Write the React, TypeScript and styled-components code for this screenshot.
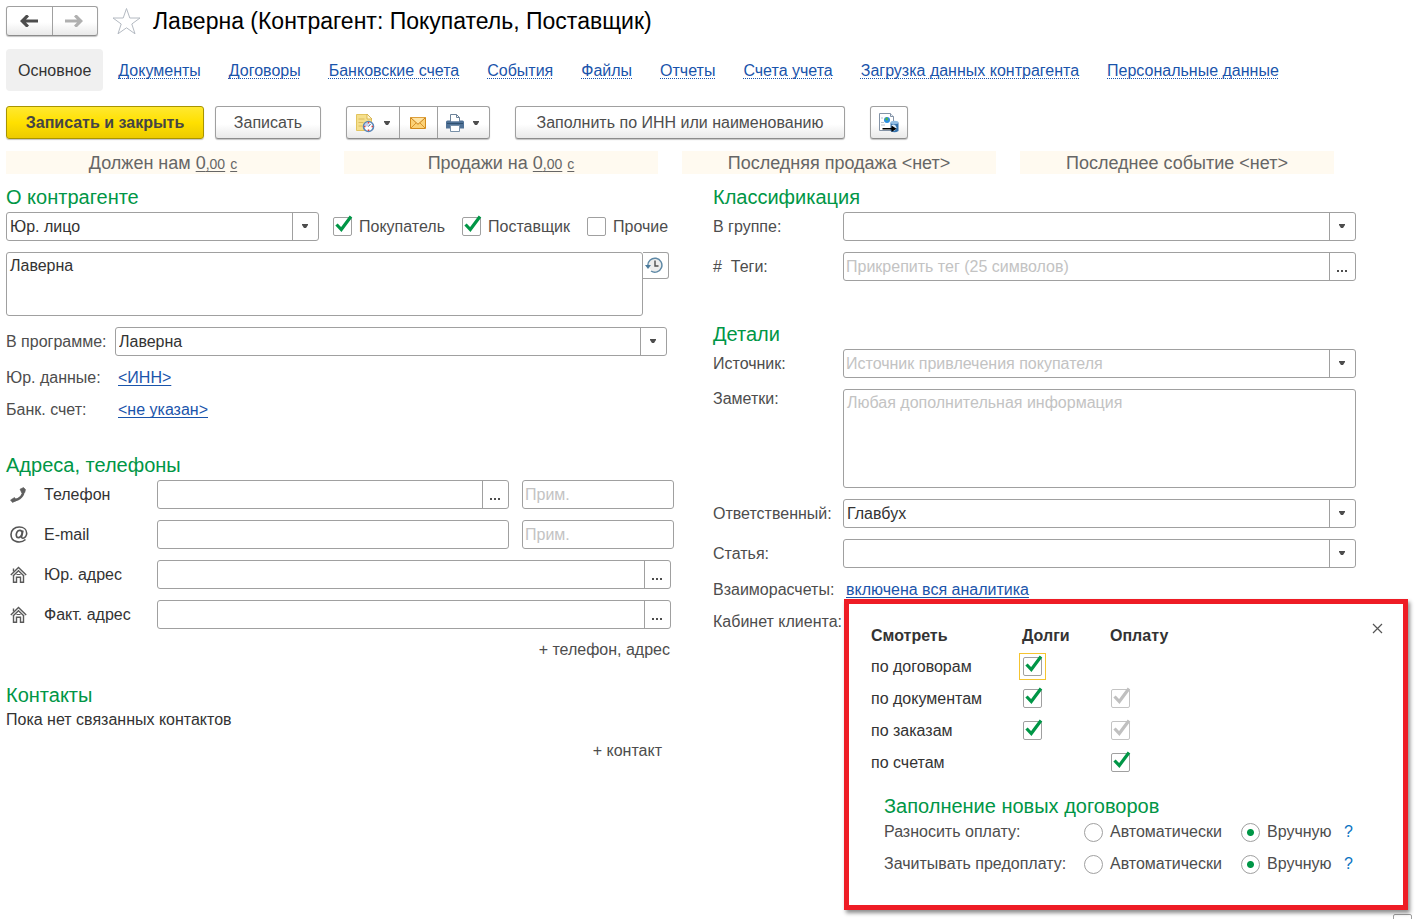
import React from "react";
import styled, { createGlobalStyle, css } from "styled-components";

const GlobalStyle = createGlobalStyle`
  * { box-sizing: border-box; }
  body {
    margin: 0;
    background: #fff;
    color: #4d4d4d;
    font: 16px/20px "Liberation Sans", Arial, sans-serif;
  }
  button, input, select, textarea { font: inherit; color: inherit; margin: 0; }
`;

const BORDER = "#a0a0a0";
const GREEN = "#009646";
const BLUE = "#1a54ab";

const Page = styled.div`
  display: flex;
  flex-direction: column;
  min-height: 100vh;
  overflow: hidden;
  padding-left: 6px;
`;

const Header = styled.header`
  display: flex;
  align-items: center;
  height: 42px;
`;

const raised = css`
  background: linear-gradient(#fff 55%, #e9e9e9);
  border: 1px solid ${BORDER};
  border-bottom-color: #8c8c8c;
  border-radius: 3px;
  box-shadow: 0 1px 1px #c4c4c4;
`;

const History = styled.div`
  ${raised}
  display: flex;
  width: 92px;
  height: 30px;
`;

const SegmentButton = styled.button<{ $width: number }>`
  display: flex;
  flex: 0 0 ${(p) => p.$width}px;
  align-items: center;
  justify-content: center;
  gap: 9px;
  padding: 0 2px 0 0;
  border: 0;
  background: none;
  & + & { border-left: 1px solid ${BORDER}; }
`;

const StarButton = styled.button`
  display: flex;
  margin: 0 12px 0 14px;
  padding: 0;
  border: 0;
  background: none;
`;

const Title = styled.h1`
  margin: 0;
  color: #000;
  font-size: 23px;
  line-height: 28px;
  font-weight: 400;
  white-space: nowrap;
`;

const Tabs = styled.nav`
  display: flex;
  align-items: center;
  gap: 28px;
  height: 42px;
  margin-top: 7px;
  white-space: nowrap;
`;

const ActiveTab = styled.a`
  padding: 12px 12px 10px;
  margin-right: -13px;
  border-radius: 4px;
  background: #f0f0f0;
  color: #333;
  text-decoration: none;
`;

const TabLink = styled.a`
  padding-top: 2px;
  color: ${BLUE};
  text-decoration: underline dotted 1px;
  text-decoration-skip-ink: none;
  text-underline-offset: 2px;
`;

const Toolbar = styled.div`
  display: flex;
  gap: 25px;
  margin: 15px 0 12px;
`;

const ButtonPair = styled.div`
  display: flex;
  gap: 11px;
`;

const ToolButton = styled.button<{ $width: number; $primary?: boolean }>`
  ${raised}
  display: flex;
  align-items: center;
  justify-content: center;
  width: ${(p) => p.$width}px;
  height: 33px;
  padding: 0;
  white-space: nowrap;
  ${(p) =>
    p.$primary &&
    css`
      background: linear-gradient(#ffe830, #ffe000 50%, #eccb00);
      border-color: #a89400;
      font-weight: 700;
      color: #454545;
    `}
`;

const ButtonGroup = styled.div`
  ${raised}
  display: flex;
  width: 144px;
  height: 33px;
`;

const Stats = styled.div`
  display: grid;
  grid-template-columns: repeat(4, minmax(0, 1fr));
  gap: 24px;
  margin-right: 83px;
`;

const Stat = styled.div`
  height: 23px;
  background: #fffaf0;
  color: #666;
  font-size: 18px;
  line-height: 24px;
  text-align: center;
  white-space: nowrap;
`;

const Amount = styled.span`
  text-decoration: underline 1px;
  text-underline-offset: 2px;
  small { font-size: 14px; }
`;

const Currency = styled(Amount)`
  font-size: 14px;
`;

const Columns = styled.main`
  display: grid;
  grid-template-columns: minmax(0, 668fr) minmax(0, 643fr);
  gap: 39px;
  margin: 11px 61px 0 0;
`;

const Column = styled.div`
  display: flex;
  flex-direction: column;
`;

const Section = styled.section<{ $before?: number }>`
  display: flex;
  flex-direction: column;
  gap: 11px;
  margin-top: ${(p) => p.$before ?? 0}px;
`;

const Heading = styled.h2`
  margin: 0 0 -8px;
  color: ${GREEN};
  font-size: 20px;
  line-height: 24px;
  font-weight: 400;
  white-space: nowrap;
`;

const Row = styled.div<{ $label: number; $end?: number; $top?: boolean }>`
  display: grid;
  grid-template-columns: ${(p) => p.$label}px minmax(0, 1fr);
  align-items: ${(p) => (p.$top ? "start" : "center")};
  margin-right: ${(p) => p.$end ?? 0}px;
`;

const TextRow = styled(Row)`
  line-height: 22px;
  height: 21px;
`;

const Label = styled.label`
  white-space: pre;
`;

const KindRow = styled.div`
  display: flex;
  align-items: center;
  gap: 17px;
`;

const KindField = styled.div`
  flex: 0 1 313px;
  margin-right: -3px;
`;

const Frame = styled.div`
  display: grid;
  grid-template-columns: minmax(0, 1fr) 26px;
  height: 29px;
  border: 1px solid ${BORDER};
  border-radius: 3px;
  background: #fff;
`;

const Select = styled.select<{ $hint?: boolean }>`
  grid-area: 1 / 1 / 2 / 3;
  appearance: none;
  width: 100%;
  padding: 0 28px 0 ${(p) => (p.$hint ? 2 : 3)}px;
  border: 0;
  background: none;
  color: ${(p) => (p.$hint ? "#c3c3c3" : "#333")};
`;

const ArrowCell = styled.span`
  grid-area: 1 / 2;
  display: flex;
  align-items: center;
  justify-content: center;
  padding: 0 2px 1px 0;
  border-left: 1px solid ${BORDER};
  pointer-events: none;
`;

const FrameInput = styled.input`
  width: 100%;
  padding: 0 2px;
  border: 0;
  background: none;
  &::placeholder { color: #c3c3c3; opacity: 1; }
`;

const DotsButton = styled.button`
  display: flex;
  align-items: center;
  justify-content: center;
  padding: 8px 1px 0 0;
  border: 0;
  border-left: 1px solid ${BORDER};
  background: none;
`;

const PlainInput = styled.input`
  width: 100%;
  height: 29px;
  padding: 0 2px;
  border: 1px solid ${BORDER};
  border-radius: 3px;
  &::placeholder { color: #c3c3c3; opacity: 1; }
`;

const TextArea = styled.textarea<{ $height: number }>`
  display: block;
  width: 100%;
  height: ${(p) => p.$height}px;
  padding: 3px;
  border: 1px solid ${BORDER};
  border-radius: 3px;
  color: #333;
  resize: none;
  &::placeholder { color: #c3c3c3; opacity: 1; }
`;

const NameRow = styled.div`
  display: flex;
  align-items: flex-start;
  margin-right: 5px;
`;

const HistoryButton = styled.button`
  display: flex;
  flex: 0 0 26px;
  align-items: center;
  justify-content: center;
  height: 27px;
  padding: 0 3px 2px 0;
  border: 1px solid ${BORDER};
  border-left: 0;
  border-radius: 0 3px 3px 0;
  background: #fff;
`;

const Link = styled.a`
  color: ${BLUE};
  text-decoration: underline 1px;
  text-underline-offset: 2px;
  text-decoration-skip-ink: none;
  white-space: nowrap;
`;

const LinkCell = styled.div`
  padding-left: 3px;
`;

const CheckLabel = styled.label`
  display: flex;
  align-items: center;
  gap: 7px;
  white-space: nowrap;
`;

const CheckBox = styled.span<{ $focus?: boolean }>`
  display: inline-grid;
  width: 19px;
  height: 19px;
  vertical-align: top;
  ${(p) => p.$focus && "outline: 1px solid #f5c430; outline-offset: 3px;"}
  & > * { grid-area: 1 / 1; }
  input {
    appearance: none;
    width: 19px;
    height: 19px;
    border: 1px solid ${BORDER};
    border-radius: 2px;
    background: #fff;
  }
  input:disabled { border-color: #c4c4c4; }
  svg { overflow: visible; visibility: hidden; pointer-events: none; }
  input:checked + svg { visibility: visible; }
`;

const ContactRow = styled.div<{ $end?: number; $note?: boolean }>`
  display: grid;
  grid-template-columns: 38px 113px minmax(0, 1fr) ${(p) => (p.$note ? "152px" : "")};
  align-items: center;
  margin-right: ${(p) => p.$end ?? 0}px;
  label { color: #333; }
  & > svg { margin-left: 4px; }
`;

const MainCell = styled.div`
  margin-right: 13px;
`;

const AddButton = styled.button<{ $end: number }>`
  align-self: flex-end;
  margin-right: ${(p) => p.$end}px;
  padding: 0;
  border: 0;
  background: none;
`;

const Note = styled.p`
  margin: 0;
  color: #333;
`;

const PopupAnchor = styled.div`
  position: relative;
  padding-left: 3px;
`;

const Popup = styled.div`
  position: absolute;
  top: calc(100% - 2px);
  left: 1px;
  right: -52px;
  height: 311px;
  padding: 17px 22px 0;
  border: 5px solid #ee1c25;
  background: #fff;
  box-shadow: 2px 3px 4px rgba(0, 0, 0, 0.45);
  line-height: 20px;
`;

const CloseButton = styled.button`
  position: absolute;
  top: 19px;
  right: 20px;
  display: flex;
  padding: 0;
  border: 0;
  background: none;
`;

const Matrix = styled.table`
  border-collapse: collapse;
  color: #333;
  th, td {
    height: 32px;
    padding: 0;
    text-align: left;
    vertical-align: middle;
    font-weight: 400;
    line-height: 20px;
  }
  thead th { height: 30px; font-weight: 700; }
  th:first-child { width: 151px; }
  th:nth-child(2) { width: 88px; }
  td { padding-left: 1px; }
`;

const Defaults = styled.div`
  margin: 15px 0 0 13px;
`;

const DefaultRow = styled.div`
  display: grid;
  grid-template-columns: 200px 157px 103px auto;
  align-items: center;
  height: 32px;
  white-space: nowrap;
`;

const DefaultsHeading = styled(Heading)`
  margin: 0 0 -2px;
`;

const Radio = styled.input`
  appearance: none;
  display: block;
  width: 19px;
  height: 19px;
  border: 1px solid ${BORDER};
  border-radius: 50%;
  background: #fff;
  &:checked { background: radial-gradient(circle, ${GREEN} 3px, #fff 4px); }
`;

const Help = styled.a`
  color: #0a73c2;
  text-decoration: none;
`;

const Footer = styled.footer`
  height: 5px;
  margin: auto 5px 0 0;
  overflow: hidden;
  text-align: right;
`;

function Caret() {
  return (
    <svg width="6" height="4" viewBox="0 0 6 4" aria-hidden="true">
      <path d="M0 0h6v1L4 4H2L0 1z" fill="#4d4d4d" />
    </svg>
  );
}

function Dots() {
  return (
    <svg width="10" height="2" viewBox="0 0 10 2" aria-hidden="true">
      <path d="M0 0h2v2H0zM4 0h2v2H4zM8 0h2v2H8z" fill="#4d4d4d" />
    </svg>
  );
}

function Arrow({ color, flip }: { color: string; flip?: boolean }) {
  return (
    <svg width="18" height="12" viewBox="0 0 18 12" aria-hidden="true">
      <path
        d={flip ? "M0 4.5h12l-3-3L10.5 0H12l6 6-6 6h-1.5L9 10.5l3-3H0z" : "M18 4.5H6l3-3L7.5 0H6L0 6l6 6h1.5L9 10.5l-3-3h12z"}
        fill={color}
      />
    </svg>
  );
}

function Star() {
  return (
    <svg width="29" height="28" viewBox="0 0 29 28" aria-hidden="true">
      <path
        d="M14.5 1.5 17.8 11H28l-8.200 6 3.200 9.800-8.500-6-8.500 6L9.200 17 1 11h10.200z"
        fill="#fff"
        stroke="#b4bac2"
      />
    </svg>
  );
}

function ReminderIcon() {
  return (
    <svg width="20" height="20" viewBox="0 0 20 20" aria-hidden="true">
      <path d="M1.5 1.5h11l4 4v12h-15z" fill="#f5df8c" stroke="#e2c45f" />
      <path d="M12 1v5h5z" fill="#fff6cf" stroke="#d3ad45" strokeWidth=".8" />
      <path d="M3.5 6h6M3.5 9.5h5M3.5 13h4" stroke="#dcbc5c" />
      <circle cx="13.5" cy="13.5" r="5" fill="#fff" stroke="#5a87b8" strokeWidth="1.6" />
      <path d="M13.5 13.5v-4a4 4 0 0 0-4 4z" fill="#c2d2f0" />
      <path d="M13.5 9v1.5M13.5 16.5V18M9 13.5h1.5M16.5 13.5H18" stroke="#e2403a" strokeWidth="1.5" />
      <path d="M13.5 13.5l2-2.500" stroke="#365f91" />
    </svg>
  );
}

function MailIcon() {
  return (
    <svg width="16" height="12" viewBox="0 0 16 12" aria-hidden="true">
      <path d="M.5.5h15v11H.5z" fill="#fbd176" stroke="#d28a1c" />
      <path d="M1 11l5.5-5.500M15 11L9.5 5.5" stroke="#d9942c" />
      <path d="M.8.8 8 7.3 15.2.8" fill="#ffe4a3" stroke="#c97f16" />
    </svg>
  );
}

function PrinterIcon() {
  return (
    <svg width="18" height="18" viewBox="0 0 18 18" aria-hidden="true">
      <path d="M4.5 8V.5h6l3 3V8z" fill="#fff" stroke="#6c8299" />
      <path d="M10.5.5v3h3" fill="none" stroke="#6c8299" />
      <path d="M0 8q0-1.500 1.500-1.500H4v1h10v-1h2.500Q18 6.500 18 8v6.500H0z" fill="#4f7196" />
      <path d="M1 9.5h16" stroke="#2f506f" />
      <path d="M4.5 11.5h9v6h-9z" fill="#fff" stroke="#7890a8" />
    </svg>
  );
}

function ExchangeIcon() {
  return (
    <svg width="20" height="20" viewBox="0 0 20 20" aria-hidden="true">
      <path d="M.5.5h11l3 3v14H.5z" fill="#fff" stroke="#8493a6" />
      <path d="M11.5.5v3h3" fill="#e6edf5" stroke="#8493a6" />
      <path d="M2 9.5h3M2 12h4M2 5h2" stroke="#b6c1ce" />
      <circle cx="8" cy="7" r="3" fill="#2c8ee0" />
      <path d="M6 6l2-2 1 2-1 2z" fill="#53b53d" />
      <path d="M11.5 9.5V18q4 2.500 8 0V9.500z" fill="#3572ad" />
      <ellipse cx="15.5" cy="9.5" rx="4" ry="1.7" fill="#91bce3" />
      <path d="M12.5 12q4-1.500 5 2.500-1 4-4 3.500z" fill="#dcebf8" />
      <path d="M3.5 15h9v-2.500l5 3.200-5 3.200V16.5h-9z" fill="#000" />
    </svg>
  );
}

function ClockBackIcon() {
  return (
    <svg width="18" height="16" viewBox="0 0 18 16" aria-hidden="true">
      <circle cx="10" cy="8" r="6.5" fill="#ececec" />
      <path d="M2.9 8.5A7 7 0 1 1 6 14" fill="none" stroke="#5e88a5" strokeWidth="1.5" />
      <path d="M0 8h6l-3 4z" fill="#4c7b9c" />
      <path d="M10 3.5V9h3.5" fill="none" stroke="#4d4d4d" strokeWidth="1.4" />
    </svg>
  );
}

function PhoneIcon() {
  return (
    <svg width="16" height="16" viewBox="0 0 16 16" aria-hidden="true">
      <path d="M13 2.5C14.5 7.5 10 13 3 13.5" fill="none" stroke="#5f5f5f" strokeWidth="2.4" />
      <path d="M10 2.200 13.5.5l2 2-.7 3-3 .5zM.5 13l4-2.500 2 3-4 2z" fill="#5f5f5f" stroke="#5f5f5f" strokeWidth=".6" strokeLinejoin="round" />
    </svg>
  );
}

function AtIcon() {
  return (
    <svg width="18" height="17" viewBox="0 0 18 17" aria-hidden="true" fill="none" stroke="#555">
      <path d="M15.5 13.5C11 17.5 1 16.8 1 8.5 1 4 4.5 1 9.200 1c4.500 0 7.500 2.600 7.500 6.200 0 3-2 5-3.700 5-1.400 0-1.600-1-1.200-2.600l1.200-5.100" strokeWidth="1.6" />
      <path d="M12.3 7C11.8 3.6 8.3 3.8 7 6.200c-1.300 2.400-.8 5.500 1.200 5.500 1.700 0 3.300-1.700 4.100-4.700z" strokeWidth="1.7" />
    </svg>
  );
}

function HouseIcon() {
  return (
    <svg width="17" height="17" viewBox="0 0 17 17" aria-hidden="true" fill="none" stroke="#5a5a5a">
      <path d="M.8 9 8.5 1.500 16.2 9M3 10l5.500-5.300L14 10" strokeWidth="1.4" />
      <path d="M3.500 2.500v3M3.500 9.500v6.800h3v-5h4v5h3V9.500" strokeWidth="1.4" />
      <path d="M6.500 8.500h4" />
    </svg>
  );
}

type CheckProps = { checked?: boolean; disabled?: boolean; focus?: boolean; label?: string };

function Check({ checked, disabled, focus, label }: CheckProps) {
  return (
    <CheckBox $focus={focus}>
      <input type="checkbox" defaultChecked={checked} disabled={disabled} aria-label={label} />
      <svg width="19" height="19" viewBox="0 0 19 19" aria-hidden="true">
        <path d="M3.5 7.5 8.3 12.5 18 -.5" fill="none" stroke={disabled ? "#c0c0c0" : GREEN} strokeWidth="3.2" />
      </svg>
    </CheckBox>
  );
}

function Dropdown({ id, value = "", hint, label }: { id: string; value?: string; hint?: boolean; label?: string }) {
  return (
    <Frame>
      <Select id={id} $hint={hint} aria-label={label}>
        <option>{value}</option>
      </Select>
      <ArrowCell>
        <Caret />
      </ArrowCell>
    </Frame>
  );
}

function Picker({ id, placeholder }: { id: string; placeholder?: string }) {
  return (
    <Frame>
      <FrameInput id={id} placeholder={placeholder} />
      <DotsButton aria-label="Выбрать">
        <Dots />
      </DotsButton>
    </Frame>
  );
}

const tabs = [
  "Документы",
  "Договоры",
  "Банковские счета",
  "События",
  "Файлы",
  "Отчеты",
  "Счета учета",
  "Загрузка данных контрагента",
  "Персональные данные",
];

type Mark = "on" | "locked" | "focused" | null;
const matrix: { name: string; debts: Mark; payment: Mark }[] = [
  { name: "по договорам", debts: "focused", payment: null },
  { name: "по документам", debts: "on", payment: "locked" },
  { name: "по заказам", debts: "on", payment: "locked" },
  { name: "по счетам", debts: null, payment: "on" },
];

function MarkCell({ mark, label }: { mark: Mark; label: string }) {
  return <td>{mark && <Check checked disabled={mark === "locked"} focus={mark === "focused"} label={label} />}</td>;
}

function Money() {
  return (
    <>
      <Amount>
        0<small>,00</small>
      </Amount>{" "}
      <Currency>с</Currency>
    </>
  );
}

function AnalyticsPopup() {
  return (
    <Popup role="dialog" aria-label="Аналитика взаиморасчетов">
      <CloseButton aria-label="Закрыть">
        <svg width="11" height="11" viewBox="0 0 11 11" aria-hidden="true">
          <path d="M1 1l9 9M10 1l-9 9" stroke="#555" strokeWidth="1.2" />
        </svg>
      </CloseButton>
      <Matrix>
        <thead>
          <tr>
            <th>Смотреть</th>
            <th>Долги</th>
            <th>Оплату</th>
          </tr>
        </thead>
        <tbody>
          {matrix.map((m) => (
            <tr key={m.name}>
              <th scope="row">{m.name}</th>
              <MarkCell mark={m.debts} label={`Долги ${m.name}`} />
              <MarkCell mark={m.payment} label={`Оплату ${m.name}`} />
            </tr>
          ))}
        </tbody>
      </Matrix>
      <Defaults>
        <DefaultsHeading>Заполнение новых договоров</DefaultsHeading>
        {["Разносить оплату:", "Зачитывать предоплату:"].map((name) => (
          <DefaultRow key={name} role="radiogroup" aria-label={name}>
            <span>{name}</span>
            <CheckLabel>
              <Radio type="radio" name={name} />
              Автоматически
            </CheckLabel>
            <CheckLabel>
              <Radio type="radio" name={name} defaultChecked />
              Вручную
            </CheckLabel>
            <Help href="#help">?</Help>
          </DefaultRow>
        ))}
      </Defaults>
    </Popup>
  );
}

export default function App() {
  return (
    <Page>
      <GlobalStyle />
      <Header>
        <History>
          <SegmentButton $width={45} aria-label="Назад">
            <Arrow color="#4d4d4d" />
          </SegmentButton>
          <SegmentButton $width={45} aria-label="Вперед">
            <Arrow color="#b0b0b0" flip />
          </SegmentButton>
        </History>
        <StarButton aria-label="В избранное">
          <Star />
        </StarButton>
        <Title>Лаверна (Контрагент: Покупатель, Поставщик)</Title>
      </Header>

      <Tabs>
        <ActiveTab href="#main">Основное</ActiveTab>
        {tabs.map((t) => (
          <TabLink key={t} href="#tab">
            {t}
          </TabLink>
        ))}
      </Tabs>

      <Toolbar>
        <ButtonPair>
          <ToolButton $width={198} $primary>
            Записать и закрыть
          </ToolButton>
          <ToolButton $width={106}>Записать</ToolButton>
        </ButtonPair>
        <ButtonGroup>
          <SegmentButton $width={52} aria-label="Напоминание">
            <ReminderIcon />
            <Caret />
          </SegmentButton>
          <SegmentButton $width={38} aria-label="Письмо">
            <MailIcon />
          </SegmentButton>
          <SegmentButton $width={52} aria-label="Печать">
            <PrinterIcon />
            <Caret />
          </SegmentButton>
        </ButtonGroup>
        <ToolButton $width={330}>Заполнить по ИНН или наименованию</ToolButton>
        <ToolButton $width={38} aria-label="Обмен данными">
          <ExchangeIcon />
        </ToolButton>
      </Toolbar>

      <Stats>
        <Stat>
          Должен нам <Money />
        </Stat>
        <Stat>
          Продажи на <Money />
        </Stat>
        <Stat>Последняя продажа &lt;нет&gt;</Stat>
        <Stat>Последнее событие &lt;нет&gt;</Stat>
      </Stats>

      <Columns>
        <Column>
          <Section>
            <Heading>О контрагенте</Heading>
            <KindRow>
              <KindField>
                <Dropdown id="kind" value="Юр. лицо" label="Вид контрагента" />
              </KindField>
              <CheckLabel>
                <Check checked />
                Покупатель
              </CheckLabel>
              <CheckLabel>
                <Check checked />
                Поставщик
              </CheckLabel>
              <CheckLabel>
                <Check />
                Прочие
              </CheckLabel>
            </KindRow>
            <NameRow>
              <TextArea $height={64} defaultValue="Лаверна" aria-label="Наименование" />
              <HistoryButton aria-label="История">
                <ClockBackIcon />
              </HistoryButton>
            </NameRow>
            <Row $label={109} $end={7}>
              <Label htmlFor="short">В программе:</Label>
              <Dropdown id="short" value="Лаверна" />
            </Row>
            <TextRow $label={109}>
              <span>Юр. данные:</span>
              <LinkCell>
                <Link href="#inn">&lt;ИНН&gt;</Link>
              </LinkCell>
            </TextRow>
            <TextRow $label={109}>
              <span>Банк. счет:</span>
              <LinkCell>
                <Link href="#account">&lt;не указан&gt;</Link>
              </LinkCell>
            </TextRow>
          </Section>

          <Section $before={33}>
            <Heading>Адреса, телефоны</Heading>
            <ContactRow $note>
              <PhoneIcon />
              <Label htmlFor="phone">Телефон</Label>
              <MainCell>
                <Picker id="phone" />
              </MainCell>
              <PlainInput placeholder="Прим." aria-label="Примечание к телефону" />
            </ContactRow>
            <ContactRow $note>
              <AtIcon />
              <Label htmlFor="mail">E-mail</Label>
              <MainCell>
                <PlainInput id="mail" />
              </MainCell>
              <PlainInput placeholder="Прим." aria-label="Примечание к e-mail" />
            </ContactRow>
            <ContactRow $end={3}>
              <HouseIcon />
              <Label htmlFor="legal">Юр. адрес</Label>
              <Picker id="legal" />
            </ContactRow>
            <ContactRow $end={3}>
              <HouseIcon />
              <Label htmlFor="actual">Факт. адрес</Label>
              <Picker id="actual" />
            </ContactRow>
            <AddButton $end={4}>+ телефон, адрес</AddButton>
          </Section>

          <Section $before={23}>
            <Heading>Контакты</Heading>
            <Note>Пока нет связанных контактов</Note>
            <AddButton $end={12}>+ контакт</AddButton>
          </Section>
        </Column>

        <Column>
          <Section>
            <Heading>Классификация</Heading>
            <Row $label={130}>
              <Label htmlFor="group">В группе:</Label>
              <Dropdown id="group" />
            </Row>
            <Row $label={130}>
              <Label htmlFor="tags">#  Теги:</Label>
              <Picker id="tags" placeholder="Прикрепить тег (25 символов)" />
            </Row>
          </Section>

          <Section $before={41}>
            <Heading>Детали</Heading>
            <Row $label={130}>
              <Label htmlFor="source">Источник:</Label>
              <Dropdown id="source" value="Источник привлечения покупателя" hint />
            </Row>
            <Row $label={130} $top>
              <Label htmlFor="notes">Заметки:</Label>
              <TextArea id="notes" $height={99} placeholder="Любая дополнительная информация" />
            </Row>
            <Row $label={130}>
              <Label htmlFor="owner">Ответственный:</Label>
              <Dropdown id="owner" value="Главбух" />
            </Row>
            <Row $label={130}>
              <Label htmlFor="article">Статья:</Label>
              <Dropdown id="article" />
            </Row>
            <TextRow $label={130}>
              <span>Взаиморасчеты:</span>
              <PopupAnchor>
                <Link href="#analytics">включена вся аналитика</Link>
                <AnalyticsPopup />
              </PopupAnchor>
            </TextRow>
            <TextRow $label={130}>
              <span>Кабинет клиента:</span>
            </TextRow>
          </Section>
        </Column>
      </Columns>

      <Footer>
        <Check label="Дополнительно" />
      </Footer>
    </Page>
  );
}
